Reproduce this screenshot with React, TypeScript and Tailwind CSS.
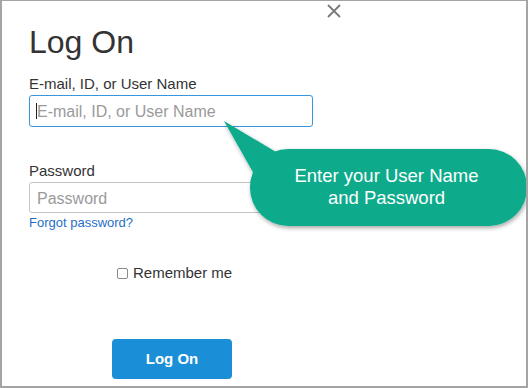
export default function App() {
  return (
    <div className="relative h-[388px] w-[528px] overflow-hidden border-t border-r-2 border-b-2 border-l-2 border-[#a4a4a4] bg-white font-['Liberation_Sans',Arial,sans-serif] text-[#333]">
      <div className="flex flex-col items-start pt-[25px] pl-[27px]">
        <h1 className="text-[32px] leading-[32px] font-normal">Log On</h1>

        <label className="mt-[17px] text-[15px] leading-[18px]">E-mail, ID, or User Name</label>
        <div className="relative mt-[2px]">
          <input
            readOnly
            placeholder="E-mail, ID, or User Name"
            className="h-[32px] w-[284px] rounded-[3px] border border-[#3995dc] pl-[7px] pt-[2px] text-[16px] outline-none placeholder:text-[#9a9a9a]"
          />
          <span className="absolute top-[8px] left-[7px] h-[16px] w-px bg-[#222]" />
        </div>

        <label className="mt-[35px] text-[15px] leading-[18px]">Password</label>
        <input
          readOnly
          placeholder="Password"
          className="mt-[2px] h-[31px] w-[284px] rounded-[3px] border border-[#c4c4c4] pl-[7px] pt-[2px] text-[16px] outline-none placeholder:text-[#9a9a9a]"
        />
        <a className="mt-[2px] text-[13px] leading-[16px] text-[#1f6fc6]">Forgot password?</a>

        <label className="mt-[33px] ml-[88px] flex items-center gap-[5px] text-[15px] leading-[18px]">
          <span className="h-[11px] w-[11px] rounded-[2px] border border-[#8a8a8a] bg-white" />
          Remember me
        </label>

        <button className="mt-[57px] ml-[83px] h-[40px] w-[120px] rounded-[4px] bg-[#1a8fd7] text-[15px] font-bold text-white">
          Log On
        </button>
      </div>

      {/* close */}
      <svg className="absolute top-[3px] left-[325px]" width="14" height="14" viewBox="0 0 14 14">
        <path d="M1 1 L13 13 M13 1 L1 13" stroke="#7a7a7a" strokeWidth="1.8" fill="none" />
      </svg>

      {/* callout */}
      <svg className="absolute top-[107px] left-[213px]" width="315" height="130" viewBox="0 0 315 130">
        <defs>
          <filter id="sh" x="-10%" y="-10%" width="120%" height="130%">
            <feDropShadow dx="1" dy="2" stdDeviation="2" floodColor="#000" floodOpacity="0.35" />
          </filter>
        </defs>
        <g filter="url(#sh)" fill="#0aab8b">
          <rect x="35" y="41" width="277" height="77" rx="38" />
          <polygon points="9,13 61,44 39,66" />
        </g>
      </svg>
      <div className="absolute top-[147px] left-[246px] flex h-[77px] w-[277px] items-center justify-center text-center text-[18.5px] leading-[21.6px] text-white">
        Enter your User Name
        <br />
        and Password
      </div>
    </div>
  );
}
